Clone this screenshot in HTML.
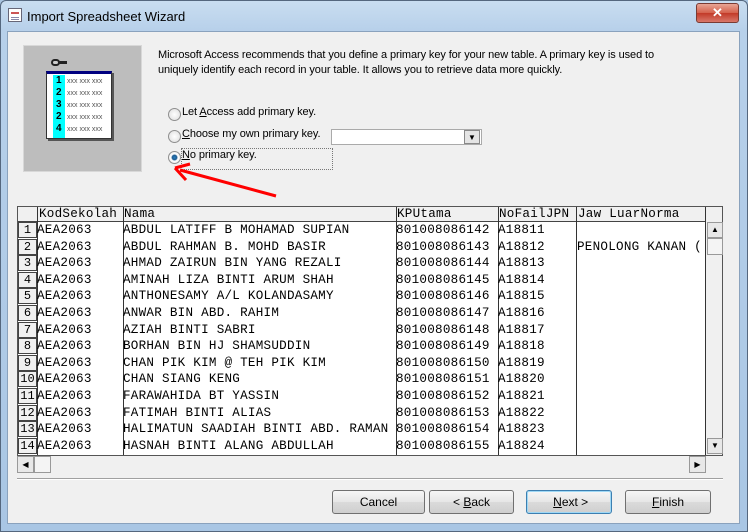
<!DOCTYPE html>
<html><head><meta charset="utf-8"><style>
*{margin:0;padding:0;box-sizing:border-box}
body{width:748px;height:532px;overflow:hidden;background:#a9c4e0;font-family:"Liberation Sans",sans-serif;position:relative}
.abs{position:absolute}
.frame{left:0;top:0;width:748px;height:532px;background:linear-gradient(180deg,#c9ddf0 0,#b7d0ea 30px,#a9c6e4 100%);border:1px solid #55677e;border-radius:6px 6px 0 0}
.client{left:7px;top:31px;width:733px;height:493px;background:#f0f0f0;border:1px solid #8aa2bd}
.title{left:27px;top:9px;font-size:13px;color:#000}
.close{left:696px;top:3px;width:43px;height:20px;border-radius:3px;background:linear-gradient(#e8a595,#d4604c 50%,#c23a28 51%,#d9786a);border:1px solid #7a3b33;color:#fff;font-weight:bold;font-size:13px;text-align:center;line-height:18px}
.t{font-size:11px;color:#000;white-space:nowrap;letter-spacing:-0.1px}
.mono{font-family:"Liberation Mono",monospace;font-size:12.6px;color:#000;white-space:nowrap;letter-spacing:0.25px}
.radio{width:13px;height:13px;border-radius:50%;border:1px solid #8f8f8f;background:radial-gradient(#fff,#dcdcdc)}
.btn{height:24px;border:1px solid #707070;border-radius:3px;background:linear-gradient(#f6f6f6,#e6e6e6 50%,#dadada 51%,#cfcfcf);font-size:12px;text-align:center;line-height:22px}
.vl{width:1px;background:#333}
.rn{left:18px;width:19px;height:16px;border:1px solid #444;background:#f0f0f0;text-align:center;font-family:"Liberation Mono",monospace;font-size:12px;line-height:15px}
</style></head><body>
<div class="abs frame"></div>
<div class="abs" style="left:8px;top:8px;width:14px;height:14px;border:1px solid #667;background:#fff"><div style="margin:3px 2px;height:2px;background:#c55"></div><div style="margin:1px 2px;height:1px;background:#88a"></div><div style="margin:1px 2px;height:1px;background:#88a"></div></div>
<div class="abs title">Import Spreadsheet Wizard</div>
<div class="abs close">✕</div>
<div class="abs client"></div>

<div class="abs" style="left:23px;top:45px;width:119px;height:127px;background:#bdbdbd;border:1px solid #d8d8d8"></div>
<div class="abs" style="left:51px;top:59px;width:9px;height:7px;border:2px solid #222;border-radius:4px;background:#ccc"></div>
<div class="abs" style="left:59px;top:61px;width:8px;height:3px;background:#222"></div>
<div class="abs" style="left:46px;top:71px;width:66px;height:68px;background:#fff;border:1px solid #333;border-top:3px solid #000080;box-shadow:2px 2px 0 #555"></div>
<div class="abs" style="left:53px;top:75px;width:12px;height:63px;background:#00ffff"></div>
<div class="abs" style="left:56px;top:75px;font:bold 10px 'Liberation Sans';line-height:12px">1<br>2<br>3<br>2<br>4</div>
<div class="abs" style="left:67px;top:76px;font:7px 'Liberation Sans';color:#555;line-height:12px">xxx xxx xxx<br>xxx xxx xxx<br>xxx xxx xxx<br>xxx xxx xxx<br>xxx xxx xxx</div>

<div class="abs t" style="left:158px;top:48px;line-height:15px">Microsoft Access recommends that you define a primary key for your new table. A primary key is used to<br>uniquely identify each record in your table. It allows you to retrieve data more quickly.</div>

<div class="abs radio" style="left:168px;top:108px"></div>
<div class="abs t" style="left:182px;top:106px">Let <u>A</u>ccess add primary key.</div>
<div class="abs radio" style="left:168px;top:130px"></div>
<div class="abs t" style="left:182px;top:128px"><u>C</u>hoose my own primary key.</div>
<div class="abs" style="left:331px;top:129px;width:151px;height:16px;background:#fff;border:1px solid #aaa"></div>
<div class="abs" style="left:464px;top:130px;width:16px;height:14px;background:#e4e4e4;border:1px solid #888;font-size:8px;text-align:center;line-height:13px">▼</div>
<div class="abs radio" style="left:168px;top:151px;background:radial-gradient(#2a7fc0 0,#1b5a90 30%,#fff 45%,#ddd)"></div>
<div class="abs" style="left:181px;top:148px;width:152px;height:22px;border:1px dotted #777"></div>
<div class="abs t" style="left:182px;top:149px"><u>N</u>o primary key.</div>
<svg class="abs" style="left:170px;top:160px" width="110" height="40"><line x1="106" y1="36" x2="10" y2="10" stroke="#f00" stroke-width="3"/><path d="M5 8 L20 4 M5 8 L16 20" stroke="#f00" stroke-width="3" fill="none"/></svg>

<div class="abs" style="left:17px;top:206px;width:706px;height:250px;background:#fff;border:1px solid #555"></div>
<div class="abs" style="left:18px;top:207px;width:688px;height:15px;background:#f0f0f0;border-bottom:1px solid #444"></div>
<div class="abs mono" style="left:39px;top:207px">KodSekolah</div>
<div class="abs mono" style="left:124px;top:207px">Nama</div>
<div class="abs mono" style="left:397px;top:207px">KPUtama</div>
<div class="abs mono" style="left:499px;top:207px">NoFailJPN</div>
<div class="abs mono" style="left:578px;top:207px">Jaw LuarNorma</div>
<div class="abs vl" style="left:37px;top:207px;height:248px"></div>
<div class="abs vl" style="left:123px;top:207px;height:248px"></div>
<div class="abs vl" style="left:396px;top:207px;height:248px"></div>
<div class="abs vl" style="left:498px;top:207px;height:248px"></div>
<div class="abs vl" style="left:576px;top:207px;height:248px"></div>
<div class="abs vl" style="left:705px;top:207px;height:248px"></div>
<div class="abs" style="left:706px;top:207px;width:16px;height:248px;background:#f0f0f0"></div>
<div class="abs" style="left:707px;top:222px;width:16px;height:16px;border:1px solid #999;background:#e8e8e8;font-size:8px;text-align:center;line-height:14px">▲</div>
<div class="abs" style="left:707px;top:238px;width:16px;height:17px;border:1px solid #999;background:#f4f4f4"></div>
<div class="abs" style="left:707px;top:438px;width:16px;height:16px;border:1px solid #999;background:#e8e8e8;font-size:8px;text-align:center;line-height:14px">▼</div>
<div class="abs" style="left:17px;top:456px;width:706px;height:17px;background:#f0f0f0"></div>
<div class="abs" style="left:17px;top:456px;width:17px;height:17px;border:1px solid #999;background:#e8e8e8;font-size:8px;text-align:center;line-height:15px">◀</div>
<div class="abs" style="left:34px;top:456px;width:17px;height:17px;border:1px solid #999;background:#f4f4f4"></div>
<div class="abs" style="left:689px;top:456px;width:17px;height:17px;border:1px solid #999;background:#e8e8e8;font-size:8px;text-align:center;line-height:15px">▶</div>

<div id="rows"></div>
<script>
var d=[["ABDUL LATIFF B MOHAMAD SUPIAN","A18811",""],["ABDUL RAHMAN B. MOHD BASIR","A18812","PENOLONG KANAN ("],["AHMAD ZAIRUN BIN YANG REZALI","A18813",""],["AMINAH LIZA BINTI ARUM SHAH","A18814",""],["ANTHONESAMY A/L KOLANDASAMY","A18815",""],["ANWAR BIN ABD. RAHIM","A18816",""],["AZIAH BINTI SABRI","A18817",""],["BORHAN BIN HJ SHAMSUDDIN","A18818",""],["CHAN PIK KIM @ TEH PIK KIM","A18819",""],["CHAN SIANG KENG","A18820",""],["FARAWAHIDA BT YASSIN","A18821",""],["FATIMAH BINTI ALIAS","A18822",""],["HALIMATUN SAADIAH BINTI ABD. RAMAN","A18823",""],["HASNAH BINTI ALANG ABDULLAH","A18824",""]];
var h="";for(var i=0;i<14;i++){var y=(222+i*16.6).toFixed(1);h+='<div class="abs rn" style="top:'+y+'px">'+(i+1)+'</div>'+'<div class="abs mono" style="left:37px;top:'+(+y+1)+'px">AEA2063</div>'+'<div class="abs mono" style="left:123px;top:'+(+y+1)+'px">'+d[i][0]+'</div>'+'<div class="abs mono" style="left:396px;top:'+(+y+1)+'px">'+(801008086142+i)+'</div>'+'<div class="abs mono" style="left:498px;top:'+(+y+1)+'px">'+d[i][1]+'</div>'+'<div class="abs mono" style="left:577px;top:'+(+y+1)+'px">'+d[i][2]+'</div>';}
document.getElementById("rows").innerHTML=h;
</script>

<div class="abs" style="left:17px;top:478px;width:706px;height:2px;border-top:1px solid #a0a0a0;border-bottom:1px solid #fff"></div>
<div class="abs btn" style="left:332px;top:490px;width:93px">Cancel</div>
<div class="abs btn" style="left:429px;top:490px;width:85px">&lt; <u>B</u>ack</div>
<div class="abs btn" style="left:526px;top:490px;width:86px;border-color:#3c7fb1;box-shadow:inset 0 0 0 1px #9fd8f5">&nbsp;<u>N</u>ext &gt;</div>
<div class="abs btn" style="left:625px;top:490px;width:86px"><u>F</u>inish</div>
</body></html>
